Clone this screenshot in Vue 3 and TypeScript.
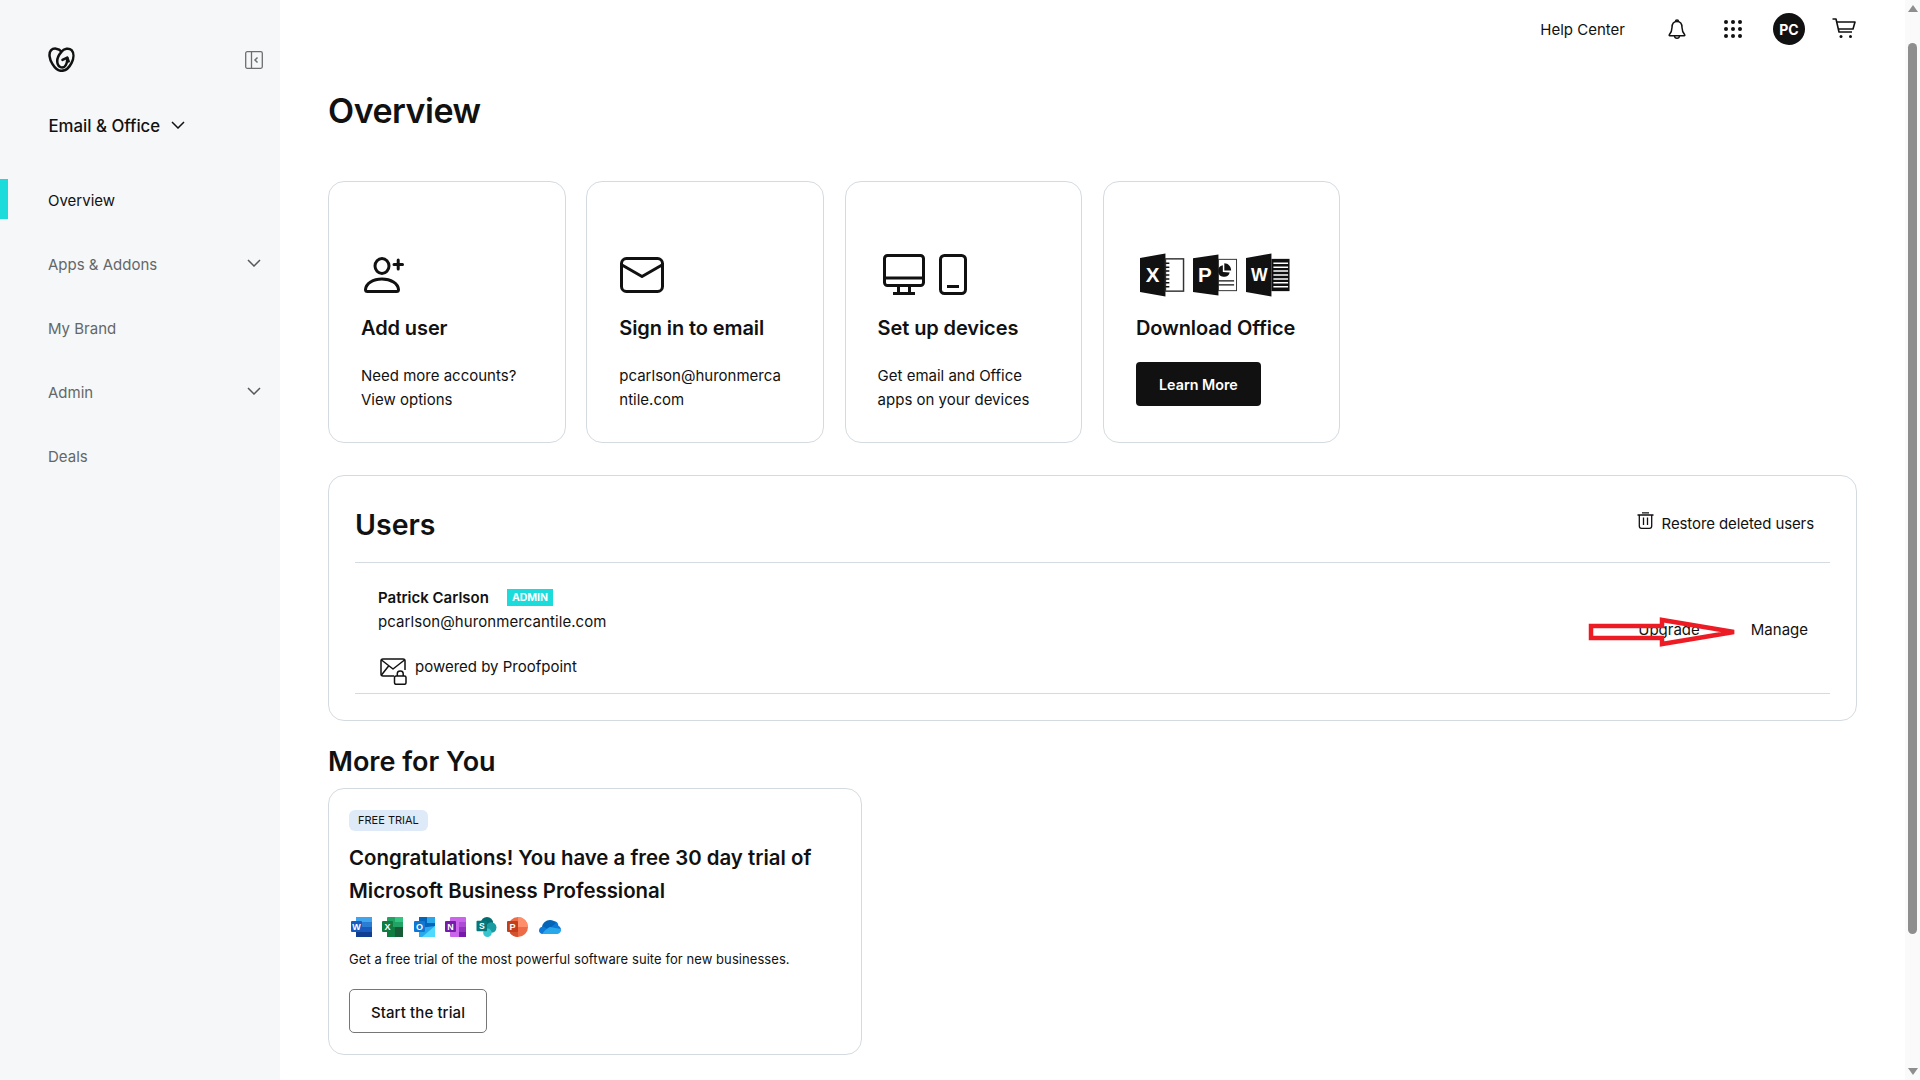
<template>
  <div class="app">
    <!-- sidebar -->
    <aside class="sidebar">
      <div class="logo-row">
        <svg class="logo" viewBox="0 0 28 26" fill="none" stroke="#111" stroke-width="2.600" stroke-linecap="round" stroke-linejoin="round">
          <path d="M14 5C11 1 5.500 0.800 3 3.500C0.500 6.500 1.300 12.500 4.500 17.500C7.500 22.500 11 24.800 14 24.800C18 24.800 22 21.500 24.500 16.500C27 11.500 27 6 24.500 3.300C21.800 0.800 16.500 1.500 14 5C10.800 8.500 8.800 13.500 10 17.500C11 21 14.500 22 17 20.500C19.500 18.800 20 15.500 20 11.500" />
          <path d="M15 13.500L20 11L21.500 15" />
        </svg>
        <svg class="collapse" viewBox="0 0 18 18" fill="none" stroke="#6b6f72" stroke-width="1.300">
          <rect x="0.700" y="0.700" width="16.600" height="16.600" rx="1.500" />
          <path d="M6.500 1V17" />
          <path d="M12.500 6.500L10 9L12.500 11.500" stroke-width="1.500" />
        </svg>
      </div>
      <div class="product">
        <span>Email &amp; Office</span>
        <svg class="product-chev" viewBox="0 0 14 8" fill="none" stroke="#111" stroke-width="1.500"><path d="M1 1L7 7L13 1" /></svg>
      </div>
      <nav class="nav">
        <div v-for="item in navItems" :key="item.label" class="nav-item" :class="{ active: item.active }">
          <span>{{ item.label }}</span>
          <svg v-if="item.sub" class="nav-chev" viewBox="0 0 14 8" fill="none" stroke="#55595c" stroke-width="1.500"><path d="M1 1L7 7L13 1" /></svg>
        </div>
      </nav>
    </aside>

    <main class="main">
      <header class="topbar">
        <span class="help">Help Center</span>
        <svg class="bell" viewBox="0 0 18 21" fill="none" stroke="#111" stroke-width="1.500" stroke-linejoin="round">
          <path d="M9 2.500C5.500 2.500 4 5 4 8.500C4 12.500 2.800 14 1.300 15.800C1 16.300 1.200 16.800 1.800 16.800H16.200C16.800 16.800 17 16.300 16.700 15.800C15.200 14 14 12.500 14 8.500C14 5 12.500 2.500 9 2.500Z" />
          <path d="M7.500 2.500C7.500 0.500 10.500 0.500 10.500 2.500" />
          <path d="M6.500 17C6.800 20 11.200 20 11.500 17" />
        </svg>
        <div class="dots"><i v-for="n in 9" :key="n"></i></div>
        <div class="avatar">PC</div>
        <svg class="cart" viewBox="0 0 24 21" fill="none" stroke="#111" stroke-width="1.600" stroke-linejoin="round">
          <path d="M0.500 1H4L7 14H20" />
          <path d="M4.800 4H23L21 11H6.400" />
          <circle cx="9" cy="18.500" r="1.500" fill="#111" stroke="none" />
          <circle cx="18.500" cy="18.500" r="1.500" fill="#111" stroke="none" />
        </svg>
      </header>

      <h1 class="page-title">Overview</h1>

      <section class="cards">
        <div class="card">
          <div class="card-icon user-icon">
            <svg class="i-user" viewBox="0 0 40 36" fill="none" stroke="#111" stroke-width="3" stroke-linejoin="round" stroke-linecap="round">
              <ellipse cx="18" cy="9" rx="7" ry="7.500" />
              <path d="M3.500 34.500C2 34.500 1.500 33.500 1.500 32.500C2 26.500 9 22 18 22C27 22 34 26.500 34.500 32.500C34.500 33.500 34 34.500 32.500 34.500Z" />
              <path d="M30 7.500H38.500M34.200 3V12" />
            </svg>
          </div>
          <h3>Add user</h3>
          <p>Need more accounts?<br />View options</p>
        </div>
        <div class="card">
          <div class="card-icon mail-icon">
            <svg class="i-mail" viewBox="0 0 44 36" fill="none" stroke="#111" stroke-width="3" stroke-linejoin="round">
              <rect x="1.500" y="1.500" width="41" height="33" rx="5" />
              <path d="M2 8L22 19.500L42 8" />
            </svg>
          </div>
          <h3>Sign in to email</h3>
          <p>pcarlson@huronmerca<br />ntile.com</p>
        </div>
        <div class="card">
          <div class="card-icon devices">
            <svg class="i-desk" viewBox="0 0 42 41" fill="none" stroke="#111" stroke-width="3" stroke-linejoin="round">
              <rect x="1.500" y="1.500" width="39" height="30" rx="3" />
              <path d="M1.500 24H40.500" />
              <path d="M15.500 31.500V39M26.500 31.500V39M10 39.500H32" />
            </svg>
            <svg class="i-phone" viewBox="0 0 28 41" fill="none" stroke="#111" stroke-width="3">
              <rect x="1.500" y="1.500" width="25" height="38" rx="4" />
              <path d="M8 32.500H20" stroke-width="3" />
            </svg>
          </div>
          <h3>Set up devices</h3>
          <p>Get email and Office<br />apps on your devices</p>
        </div>
        <div class="card">
          <div class="card-icon office">
            <svg viewBox="0 0 46 44" class="i-office">
              <path d="M0 4.500L26 0V44L0 39.500Z" fill="#111" />
              <rect x="26" y="5.500" width="18.500" height="33" fill="#fff" stroke="#333" stroke-width="1.500" />
              <path d="M26 10H30M26 14H30M26 18H30M26 22H30M26 26H30M26 30H30M26 34H30" stroke="#111" stroke-width="1.500" />
              <text x="13" y="29.500" class="door-letter">X</text>
            </svg>
            <svg viewBox="0 0 46 44" class="i-office">
              <path d="M0 5L26 1V43L0 39.500Z" fill="#111" />
              <rect x="26" y="6" width="18.500" height="32" fill="#fff" stroke="#333" stroke-width="1" />
              <path d="M26 28H42M26 32H42" stroke="#111" stroke-width="1.300" />
              <path d="M32 10V17.500H39C39 13.500 36 10 32 10Z" fill="#111" />
              <path d="M30.500 12A6 6 0 1 0 37.500 19.500L30.500 19Z" fill="#111" />
              <text x="12" y="29.500" class="door-letter">P</text>
            </svg>
            <svg viewBox="0 0 46 44" class="i-office">
              <path d="M0 4.500L26 0V44L0 39.500Z" fill="#111" />
              <rect x="26" y="5.500" width="18.500" height="33" fill="#111" />
              <path d="M28 10H43M28 14H43M28 18H43M28 22H43M28 26H43M28 30H43M28 34H43" stroke="#fff" stroke-width="1.500" />
              <text x="13.500" y="28" class="door-letter word">W</text>
            </svg>
          </div>
          <h3>Download Office</h3>
          <button class="learn">Learn More</button>
        </div>
      </section>

      <section class="users">
        <div class="users-head">
          <h2>Users</h2>
          <div class="restore">
            <svg class="trash" viewBox="0 0 17 17" fill="none" stroke="#111" stroke-width="1.300" stroke-linejoin="round">
              <path d="M0.500 3H16.500M5 0.800H12" />
              <path d="M2.300 3V14C2.300 15.400 3.200 16.300 4.500 16.300H12.500C13.800 16.300 14.700 15.400 14.700 14V3" />
              <path d="M6.500 5.500V13M10.500 5.500V13" />
            </svg>
            <span>Restore deleted users</span>
          </div>
        </div>
        <div class="user-row">
          <div class="user-info">
            <div class="user-name">
              <b>Patrick Carlson</b>
              <span class="admin">ADMIN</span>
            </div>
            <div class="user-mail">pcarlson@huronmercantile.com</div>
            <div class="proof">
              <svg class="proof-icon" viewBox="0 0 27 27" fill="none" stroke="#111" stroke-width="1.500" stroke-linejoin="round">
                <path d="M14 18H3C1.800 18 1 17.200 1 16V3C1 1.800 1.800 1 3 1H23C24.200 1 25 1.800 25 3V12" />
                <path d="M1.500 2L13 11L24.500 2M1.500 17L9 7.500" />
                <rect x="14.500" y="18" width="11.500" height="8.300" rx="1.500" />
                <path d="M17.300 18V15.500C17.300 12 23.200 12 23.200 15.500V18" />
              </svg>
              <span>powered by Proofpoint</span>
            </div>
          </div>
          <div class="user-actions">
            <span>Upgrade</span>
            <span>Manage</span>
            <!-- red arrow drawn over the screenshot -->
            <svg class="red-arrow" viewBox="0 0 150 30" fill="none" stroke="#ed1c24" stroke-width="4.500" stroke-linejoin="miter">
              <path d="M3 9H74V3L146 15L74 27V21H3Z" />
            </svg>
          </div>
        </div>
      </section>

      <h2 class="more-title">More for You</h2>
      <section class="trial">
        <span class="trial-tag">FREE TRIAL</span>
        <h3>Congratulations! You have a free 30 day trial of<br />Microsoft Business Professional</h3>
        <div class="apps">
          <svg viewBox="0 0 21 20">
            <rect x="5" y="0" width="16" height="20" rx="1" fill="#2b7cd3" />
            <rect x="5" y="0" width="16" height="5" fill="#41a5ee" />
            <rect x="5" y="10" width="16" height="5" fill="#185abd" />
            <rect x="5" y="15" width="16" height="5" fill="#103f91" />
            <rect x="0" y="4" width="11" height="11" rx="1" fill="#185abd" />
            <text x="5.500" y="13" class="app-letter">W</text>
          </svg>
          <svg viewBox="0 0 21 20">
            <rect x="5" y="0" width="16" height="20" rx="1" fill="#21a366" />
            <rect x="13" y="0" width="8" height="5" fill="#33c481" />
            <rect x="5" y="10" width="8" height="10" fill="#107c41" />
            <rect x="13" y="10" width="8" height="10" fill="#185c37" />
            <rect x="0" y="4" width="11" height="11" rx="1" fill="#107c41" />
            <text x="5.500" y="13" class="app-letter">X</text>
          </svg>
          <svg viewBox="0 0 21 20">
            <rect x="5" y="0" width="16" height="12" fill="#0364b8" />
            <rect x="13" y="0" width="8" height="6" fill="#28a8ea" />
            <path d="M5 11L21 9V20H5Z" fill="#28a8ea" />
            <path d="M8 20L21 9V20Z" fill="#50d9ff" />
            <rect x="0" y="4" width="11" height="11" rx="1" fill="#0f78d4" />
            <text x="5.500" y="13" class="app-letter">O</text>
          </svg>
          <svg viewBox="0 0 21 20">
            <rect x="5" y="0" width="16" height="20" rx="1" fill="#ca64ea" />
            <rect x="14" y="5" width="7" height="5" fill="#ae4bd5" />
            <rect x="14" y="10" width="7" height="5" fill="#9332bf" />
            <rect x="14" y="15" width="7" height="5" fill="#7719aa" />
            <rect x="0" y="4" width="11" height="11" rx="1" fill="#7719aa" />
            <text x="5.500" y="13" class="app-letter">N</text>
          </svg>
          <svg viewBox="0 0 21 21">
            <circle cx="11" cy="6.500" r="6.500" fill="#036c70" />
            <circle cx="15.500" cy="11" r="5.500" fill="#1a9ba1" />
            <circle cx="11.500" cy="16.500" r="4.500" fill="#37c6d0" />
            <rect x="0" y="4" width="11" height="11" rx="1" fill="#03787c" />
            <text x="5.500" y="13" class="app-letter">S</text>
          </svg>
          <svg viewBox="0 0 21 20">
            <circle cx="11" cy="10" r="10" fill="#ed6c47" />
            <path d="M11 0A10 10 0 0 1 21 10H11Z" fill="#ff8f6b" />
            <path d="M11 20A10 10 0 0 1 3 16V10H11Z" fill="#d35230" />
            <rect x="0" y="4" width="11" height="11" rx="1" fill="#c43e1c" />
            <text x="5.500" y="13" class="app-letter">P</text>
          </svg>
          <svg viewBox="0 0 22 14" class="cloud">
            <path d="M8 12L13 2C15 0.500 19 1 19.500 6C21 6.500 22 8 22 10Z" fill="#0f78d4" />
            <path d="M3 7C3.500 3 7 0 11 0C13.500 0 15.500 1 17 3L10 9L3 9Z" fill="#0364b8" />
            <path d="M4 14C1 14 0 12 0 10.500C0 8 2 6.500 4.500 6.800L12 11L9 14Z" fill="#0f78d4" />
            <path d="M4 14C2 14 8 8 11 7L22 9C22.500 12 20.500 14 18 14Z" fill="#28a8ea" />
          </svg>
        </div>
        <p class="trial-desc">Get a free trial of the most powerful software suite for new businesses.</p>
        <button class="start">Start the trial</button>
      </section>
    </main>

    <!-- page scrollbar -->
    <div class="scrollbar">
      <i class="arrow-up"></i>
      <div class="thumb"></div>
      <i class="arrow-down"></i>
    </div>
  </div>
</template>

<script setup lang="ts">
interface NavItem {
  label: string
  active?: boolean
  sub?: boolean
}

const navItems: NavItem[] = [
  { label: 'Overview', active: true },
  { label: 'Apps & Addons', sub: true },
  { label: 'My Brand' },
  { label: 'Admin', sub: true },
  { label: 'Deals' },
]
</script>

<style>
html,
body {
  margin: 0;
  background: #fff;
  overflow: hidden;
}
</style>

<style scoped>
.app {
  display: flex;
  width: 1920px;
  height: 1080px;
  overflow: hidden;
  font-family: Inter, "Liberation Sans", sans-serif;
  font-size: 15px;
  color: #111;
  background: #fff;
}

/* sidebar */
.sidebar {
  width: 280px;
  flex: none;
  background: #f5f7f8;
}
.logo-row {
  display: flex;
  align-items: center;
  justify-content: space-between;
  padding: 47px 17px 0 48px;
}
.logo {
  width: 27px;
  height: 25px;
}
.collapse {
  width: 18px;
  height: 18px;
}
.product {
  display: flex;
  align-items: center;
  gap: 11px;
  margin: 41px 0 0 48.500px;
  height: 26px;
  font-size: 16.800px;
  font-weight: 500;
}
.product-chev {
  width: 14px;
  height: 8px;
  margin-top: -2px;
}
.nav {
  margin-top: 29px;
}
.nav-item {
  position: relative;
  display: flex;
  align-items: center;
  justify-content: space-between;
  height: 64px;
  padding: 0 19px 0 48px;
  color: #63676a;
}
.nav-item.active {
  color: #111;
}
.nav-item.active::before {
  content: "";
  position: absolute;
  left: 0;
  top: 11px;
  width: 8px;
  height: 40px;
  background: #1bdbdb;
}
.nav-chev {
  width: 14px;
  height: 8px;
  margin-top: -2px;
}

/* main column */
.main {
  flex: 1;
  min-width: 0;
  padding: 0 48px;
}
.topbar {
  display: flex;
  align-items: center;
  height: 58px;
  padding-right: 1px;
}
.help {
  margin-left: auto;
}
.bell {
  width: 18px;
  height: 21px;
  margin-left: 43px;
}
.dots {
  display: grid;
  grid-template-columns: repeat(3, 4px);
  gap: 3px;
  margin-left: 38px;
}
.dots i {
  width: 4px;
  height: 4px;
  border-radius: 50%;
  background: #111;
}
.avatar {
  display: flex;
  align-items: center;
  justify-content: center;
  width: 32px;
  height: 32px;
  margin-left: 31px;
  border-radius: 50%;
  background: #111;
  color: #fff;
  font-size: 14px;
  font-weight: 700;
}
.cart {
  width: 24px;
  height: 21px;
  margin-left: 27px;
  margin-top: -2px;
}
.page-title {
  margin: 30px 0 0;
  height: 46px;
  font-size: 34px;
  line-height: 46px;
  font-weight: 600;
  letter-spacing: -0.500px;
}

/* quick cards */
.cards {
  display: flex;
  gap: 20.800px;
  margin-top: 47px;
}
.card {
  box-sizing: border-box;
  width: 237.500px;
  height: 262px;
  padding: 0 16px 0 32px;
  border: 1px solid #d4dbe0;
  border-radius: 16px;
}
.card-icon {
  display: flex;
  align-items: flex-end;
  height: 64px;
  margin-top: 49px;
}
.card h3 {
  margin: 17px 0 0;
  font-size: 20px;
  line-height: 32px;
  font-weight: 600;
  letter-spacing: -0.100px;
}
.card p {
  margin: 20px 0 0;
  line-height: 24px;
  white-space: nowrap;
}
.user-icon {
  padding-left: 3px;
}
.mail-icon {
  padding-left: 1px;
}
.i-user {
  width: 40px;
  height: 36px;
  margin-bottom: 2px;
}
.i-mail {
  width: 44px;
  height: 36px;
  margin-bottom: 2px;
}
.devices {
  gap: 14px;
  padding-left: 5px;
}
.i-desk {
  width: 42px;
  height: 41px;
}
.i-phone {
  width: 28px;
  height: 41px;
}
.office {
  gap: 8px;
  padding-left: 4px;
}
.i-office {
  width: 45px;
  height: 44px;
  margin-bottom: -2px;
}
.door-letter {
  font-family: "Liberation Sans", sans-serif;
  font-size: 21px;
  font-weight: 700;
  fill: #fff;
  text-anchor: middle;
}
.door-letter.word {
  font-size: 18px;
}
.learn {
  display: block;
  width: 125px;
  height: 44px;
  margin-top: 18px;
  padding: 0;
  border: 0;
  border-radius: 4px;
  background: #111;
  color: #fff;
  font: 600 14.300px Inter, "Liberation Sans", sans-serif;
}

/* users */
.users {
  box-sizing: border-box;
  height: 246px;
  margin-top: 32px;
  padding: 0 26px;
  border: 1px solid #d4dbe0;
  border-radius: 16px;
}
.users-head {
  display: flex;
  align-items: center;
  justify-content: space-between;
  box-sizing: border-box;
  height: 87px;
  padding: 11px 16px 0 0;
  border-bottom: 1px solid #d4dbe0;
}
.users-head h2 {
  margin: 0;
  font-size: 28.500px;
  font-weight: 600;
}
.restore {
  display: flex;
  align-items: center;
  gap: 8px;
  letter-spacing: -0.100px;
  margin-top: -2px;
}
.trash {
  width: 17px;
  height: 17px;
  margin-top: -7px;
}
.user-row {
  display: flex;
  justify-content: space-between;
  box-sizing: border-box;
  height: 131px;
  padding: 22px 22px 0 23px;
  border-bottom: 1px solid #d4dbe0;
}
.user-name {
  display: flex;
  align-items: center;
  gap: 19px;
  height: 24px;
}
.user-name b {
  font-weight: 600;
}
.admin {
  display: block;
  height: 17px;
  padding: 0 5px;
  margin: 0 0 0 -1px;
  background: #1bdbdb;
  color: #fff;
  font-size: 10.500px;
  line-height: 17px;
  font-weight: 700;
}
.user-mail {
  margin-top: 1px;
  line-height: 24px;
  letter-spacing: 0.080px;
}
.proof {
  display: flex;
  gap: 8px;
  margin-top: 23px;
  padding-left: 2px;
  line-height: 20px;
}
.proof-icon {
  width: 27px;
  height: 27px;
  margin-top: 1px;
}
.user-actions {
  position: relative;
  display: flex;
  align-self: center;
  gap: 51px;
  margin-top: -19px;
}
.red-arrow {
  position: absolute;
  left: -50px;
  top: -3px;
  width: 150px;
  height: 30px;
}

/* more for you */
.more-title {
  margin: 24px 0 0;
  height: 34px;
  font-size: 27px;
  line-height: 34px;
  font-weight: 600;
}
.trial {
  box-sizing: border-box;
  width: 534px;
  height: 267px;
  margin-top: 9px;
  padding: 21px 20px 0;
  border: 1px solid #d4dbe0;
  border-radius: 16px;
}
.trial-tag {
  display: block;
  width: fit-content;
  height: 21px;
  padding: 0 9px;
  border-radius: 6px;
  background: #deeaf7;
  font-size: 11px;
  line-height: 21px;
}
.trial h3 {
  margin: 10px 0 0;
  font-size: 20.400px;
  line-height: 33px;
  font-weight: 600;
  white-space: nowrap;
}
.apps {
  display: flex;
  align-items: center;
  gap: 10.300px;
  margin-top: 9px;
  padding-left: 2px;
  height: 22px;
}
.apps svg {
  width: 21px;
  height: 20px;
}
.apps .cloud {
  width: 22px;
  height: 14px;
}
.app-letter {
  font-family: "Liberation Sans", sans-serif;
  font-size: 9px;
  font-weight: 700;
  fill: #fff;
  text-anchor: middle;
}
.trial-desc {
  margin: 11px 0 0;
  font-size: 13px;
  line-height: 20px;
  letter-spacing: 0.070px;
}
.start {
  display: block;
  width: 138px;
  height: 44px;
  margin-top: 20px;
  padding: 3px 0 0;
  border: 1px solid #767676;
  border-radius: 5px;
  background: #fff;
  color: #111;
  font: 500 15px Inter, "Liberation Sans", sans-serif;
  letter-spacing: 0.100px;
}

/* scrollbar */
.scrollbar {
  position: relative;
  width: 15px;
  flex: none;
  display: flex;
  flex-direction: column;
  align-items: center;
  background: #fafafa;
}
.thumb {
  width: 9px;
  height: 891px;
  margin-top: 31px;
  border-radius: 5px;
  background: #8e8e8e;
}
.arrow-up {
  width: 0;
  height: 0;
  margin-top: 5px;
  border: 5px solid transparent;
  border-top: 0;
  border-bottom: 7px solid #8e8e8e;
}
.arrow-down {
  width: 0;
  height: 0;
  margin-top: auto;
  margin-bottom: 5px;
  border: 5px solid transparent;
  border-bottom: 0;
  border-top: 7px solid #8e8e8e;
}
</style>
